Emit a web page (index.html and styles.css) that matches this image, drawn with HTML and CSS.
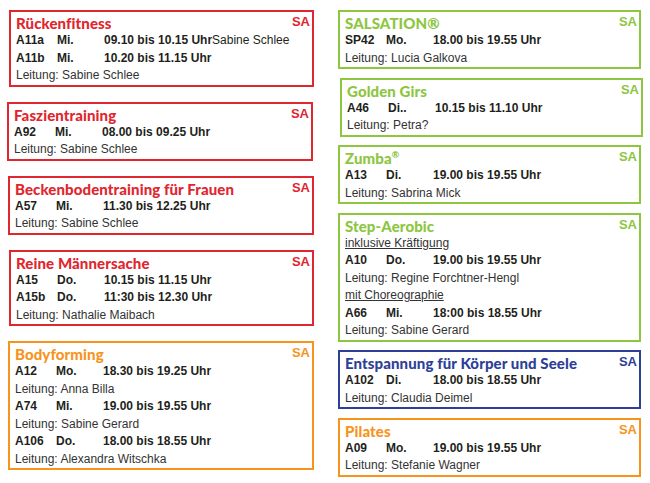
FILE: index.html
```html
<!DOCTYPE html>
<html lang="de">
<head>
<meta charset="utf-8">
<title>Kursplan</title>
<link rel="stylesheet" href="styles.css">
</head>
<body>
<div class="page">
  <div class="col col-left">
    <section class="box red b1">
      <div class="head"><h2>Rückenfitness</h2><span class="sa">SA</span></div>
      <div class="row"><b>A11a</b><b>Mi.</b><span><b>09.10 bis 10.15 Uhr</b>Sabine Schlee</span></div>
      <div class="row"><b>A11b</b><b>Mi.</b><b>10.20 bis 11.15 Uhr</b></div>
      <div class="lead">Leitung: Sabine Schlee</div>
    </section>
    <section class="box red b2">
      <div class="head"><h2>Faszientraining</h2><span class="sa">SA</span></div>
      <div class="row"><b>A92</b><b>Mi.</b><b>08.00 bis 09.25 Uhr</b></div>
      <div class="lead">Leitung: Sabine Schlee</div>
    </section>
    <section class="box red b3">
      <div class="head"><h2>Beckenbodentraining für Frauen</h2><span class="sa">SA</span></div>
      <div class="row"><b>A57</b><b>Mi.</b><b>11.30 bis 12.25 Uhr</b></div>
      <div class="lead">Leitung: Sabine Schlee</div>
    </section>
    <section class="box red b4">
      <div class="head"><h2>Reine Männersache</h2><span class="sa">SA</span></div>
      <div class="row"><b>A15</b><b>Do.</b><b>10.15 bis 11.15 Uhr</b></div>
      <div class="row"><b>A15b</b><b>Do.</b><b>11:30 bis 12.30 Uhr</b></div>
      <div class="lead">Leitung: Nathalie Maibach</div>
    </section>
    <section class="box orange b5">
      <div class="head"><h2>Bodyforming</h2><span class="sa">SA</span></div>
      <div class="row"><b>A12</b><b>Mo.</b><b>18.30 bis 19.25 Uhr</b></div>
      <div class="lead">Leitung: Anna Billa</div>
      <div class="row"><b>A74</b><b>Mi.</b><b>19.00 bis 19.55 Uhr</b></div>
      <div class="lead">Leitung: Sabine Gerard</div>
      <div class="row"><b>A106</b><b>Do.</b><b>18.00 bis 18.55 Uhr</b></div>
      <div class="lead">Leitung: Alexandra Witschka</div>
    </section>
  </div>
  <div class="col col-right">
    <section class="box green">
      <div class="head"><h2>SALSATION®</h2><span class="sa">SA</span></div>
      <div class="row"><b>SP42</b><b>Mo.</b><b>18.00 bis 19.55 Uhr</b></div>
      <div class="lead">Leitung: Lucia Galkova</div>
    </section>
    <section class="box green shift">
      <div class="head"><h2>Golden Girs</h2><span class="sa">SA</span></div>
      <div class="row"><b>A46</b><b>Di..</b><b>10.15 bis 11.10 Uhr</b></div>
      <div class="lead">Leitung: Petra?</div>
    </section>
    <section class="box green">
      <div class="head"><h2>Zumba<sup>®</sup></h2><span class="sa">SA</span></div>
      <div class="row"><b>A13</b><b>Di.</b><b>19.00 bis 19.55 Uhr</b></div>
      <div class="lead">Leitung: Sabrina Mick</div>
    </section>
    <section class="box green">
      <div class="head"><h2>Step-Aerobic</h2><span class="sa">SA</span></div>
      <div class="lead u">inklusive Kräftigung</div>
      <div class="row"><b>A10</b><b>Do.</b><b>19.00 bis 19.55 Uhr</b></div>
      <div class="lead">Leitung: Regine Forchtner-Hengl</div>
      <div class="lead u">mit Choreographie</div>
      <div class="row"><b>A66</b><b>Mi.</b><b>18:00 bis 18.55 Uhr</b></div>
      <div class="lead">Leitung: Sabine Gerard</div>
    </section>
    <section class="box blue">
      <div class="head"><h2>Entspannung für Körper und Seele</h2><span class="sa">SA</span></div>
      <div class="row"><b>A102</b><b>Di.</b><b>18.00 bis 18.55 Uhr</b></div>
      <div class="lead">Leitung: Claudia Deimel</div>
    </section>
    <section class="box orange">
      <div class="head"><h2>Pilates</h2><span class="sa">SA</span></div>
      <div class="row"><b>A09</b><b>Mo.</b><b>19.00 bis 19.55 Uhr</b></div>
      <div class="lead">Leitung: Stefanie Wagner</div>
    </section>
  </div>
</div>
</body>
</html>
```
FILE: styles.css
```css
html, body {
  margin: 0;
  padding: 0;
  background: #ffffff;
}
body {
  width: 650px;
  height: 483px;
  overflow: hidden;
  font-family: "Liberation Sans", Arial, sans-serif;
  font-size: 12px;
  color: #231f20;
}
.page {
  display: flex;
  padding: 10px 0 0 0;
}
.col {
  display: flex;
  flex-direction: column;
}
.col-left {
  width: 306px;
  margin-left: 8px;
  gap: 15px;
}
.col-right {
  width: 303px;
  margin-left: 24px;
  gap: 8.5px;
}
.box {
  border: 2px solid;
  padding: 2px 4px 0 5px;
  line-height: 17.5px;
}
.b1 { margin-left: 1px; }
.b2 { margin-left: -1px; margin-right: 1px; }
.b4 { margin-left: 1px; }
.shift { margin-left: 2px; margin-right: -2px; }
.red { border-color: #e0262f; color: #231f20; }
.red h2, .red .sa { color: #e0262f; }
.orange { border-color: #f7941d; }
.orange h2, .orange .sa { color: #f7941d; }
.green { border-color: #8dc63f; }
.green h2, .green .sa { color: #8dc63f; }
.blue { border-color: #2e3f97; }
.blue h2, .blue .sa { color: #2e3f97; }
.head {
  display: flex;
  justify-content: space-between;
  align-items: flex-start;
}
h2 {
  margin: 0;
  font-family: Lato, "Open Sans", sans-serif;
  font-weight: 900;
  font-size: 15px;
  line-height: 18px;
  letter-spacing: 0.1px;
}
h2 sup {
  font-size: 9px;
  line-height: 0;
  vertical-align: 6px;
}
.sa {
  font-family: "Liberation Sans", Arial, sans-serif;
  font-weight: 700;
  font-size: 13px;
  line-height: 15px;
  margin-right: -2px;
}
.row {
  display: grid;
  grid-template-columns: 41px 47px auto;
}
.row b {
  font-weight: 700;
}
.lead {
  font-weight: 400;
  color: #333333;
}
.u {
  text-decoration: underline;
}
```
